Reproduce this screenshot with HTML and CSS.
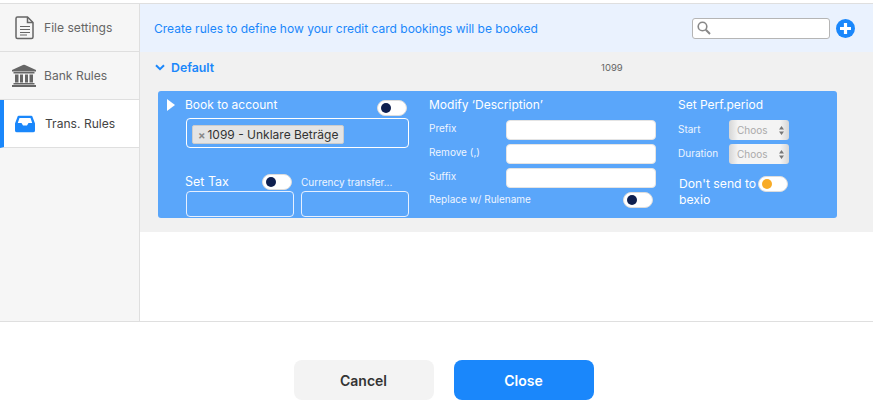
FILE: index.html
```html
<!DOCTYPE html>
<html lang="en">
<head>
<meta charset="utf-8">
<title>Trans. Rules</title>
<link rel="stylesheet" href="styles.css">
</head>
<body>
<div class="dialog">
  <div class="content">
    <nav class="sidebar">
      <div class="tab">
        <svg class="tab-icon" width="20" height="24" viewBox="0 0 20 24"><path d="M2.5 1h10l5.500 5.500V21a1.500 1.500 0 0 1-1.500 1.500h-14A1.500 1.500 0 0 1 1 21V2.500A1.500 1.500 0 0 1 2.500 1z" fill="none" stroke="#666" stroke-width="1.500"/><path d="M12.500 1v5.500H18" fill="none" stroke="#666" stroke-width="1.500"/><path d="M5 10.500h10M5 13.500h10M5 16.500h10M5 19h7" stroke="#666" stroke-width="1.200"/></svg>
        <span>File settings</span>
      </div>
      <div class="tab">
        <svg class="tab-icon" width="24" height="23" viewBox="0 0 24 23"><path d="M12 0L24 5.500V7H0V5.500z" fill="#666"/><path d="M1.500 7.500h21V9h-21zM3 10h3.500v8H3zM8 10h3v8H8zM13 10h3v8h-3zM17.500 10H21v8h-3.500zM1.500 18.500h21V20h-21zM0 20.500h24V22.500H0z" fill="#666"/></svg>
        <span>Bank Rules</span>
      </div>
      <div class="tab tab-active">
        <svg class="tab-icon" width="20" height="17" viewBox="0 0 20 17"><path d="M4 0h12a1.500 1.500 0 0 1 1.300.8L20 8v7a2 2 0 0 1-2 2H2a2 2 0 0 1-2-2V8L2.700.8A1.500 1.500 0 0 1 4 0zM4.500 2.500L2.800 7.500H6.500L8 10h4l1.500-2.500h3.700L15.500 2.500z" fill="#1a87fb" fill-rule="evenodd"/></svg>
        <span>Trans. Rules</span>
      </div>
    </nav>
    <main class="main">
      <header class="banner">
        <p class="banner-text">Create rules to define how your credit card bookings will be booked</p>
        <div class="search">
          <svg width="14" height="14" viewBox="0 0 14 14"><circle cx="5.500" cy="5.500" r="4.300" fill="none" stroke="#888" stroke-width="1.600"/><path d="M8.800 8.800L13 13" stroke="#888" stroke-width="2"/></svg>
        </div>
        <svg class="add" width="19" height="19" viewBox="0 0 19 19"><circle cx="9.500" cy="9.500" r="9.500" fill="#1a87fb"/><path d="M9.500 4v11M4 9.500h11" stroke="#fff" stroke-width="3.200"/></svg>
      </header>
      <section class="group">
        <div class="group-head">
          <svg width="10" height="7" viewBox="0 0 10 7"><path d="M1 1.200l4 4 4-4" fill="none" stroke="#1a87fb" stroke-width="2"/></svg>
          <span class="group-name">Default</span>
          <span class="group-code">1099</span>
        </div>
        <div class="rule">
          <svg class="rule-arrow" width="8" height="12" viewBox="0 0 8 12"><path d="M0 0l8 6-8 6z" fill="#fff"/></svg>
          <div class="col col-book">
            <div class="row-between book-head">
              <span class="title">Book to account</span>
              <span class="toggle toggle-low"><i class="knob"></i></span>
            </div>
            <div class="tag-box"><span class="tag"><b class="tag-x">×</b>1099 - Unklare Beträge</span></div>
            <div class="tax-row">
              <div class="tax-cell">
                <div class="row-between tax-head">
                  <span class="title title-tax">Set Tax</span>
                  <span class="toggle"><i class="knob"></i></span>
                </div>
                <div class="ghost-input"></div>
              </div>
              <div class="tax-cell">
                <div class="tax-head currency-head"><span class="small">Currency transfer...</span></div>
                <div class="ghost-input"></div>
              </div>
            </div>
          </div>
          <div class="col col-modify">
            <span class="title modify-title">Modify ‘Description’</span>
            <div class="field"><span class="small">Prefix</span><div class="white-input"></div></div>
            <div class="field"><span class="small">Remove (,)</span><div class="white-input"></div></div>
            <div class="field"><span class="small">Suffix</span><div class="white-input"></div></div>
            <div class="row-between replace"><span class="small">Replace w/ Rulename</span><span class="toggle"><i class="knob"></i></span></div>
          </div>
          <div class="col col-period">
            <span class="title modify-title">Set Perf.period</span>
            <div class="field field-period"><span class="small">Start</span><div class="select">Choos<svg width="5" height="11" viewBox="0 0 5 11"><path d="M2.500 1L5 4.500H0zM2.500 10L0 6.500h5z" fill="#777"/></svg></div></div>
            <div class="field field-period"><span class="small">Duration</span><div class="select">Choos<svg width="5" height="11" viewBox="0 0 5 11"><path d="M2.500 1L5 4.500H0zM2.500 10L0 6.500h5z" fill="#777"/></svg></div></div>
            <div class="nosend">
              <span class="nosend-text">Don't send to bexio</span>
              <span class="toggle toggle-orange"><i class="knob"></i></span>
            </div>
          </div>
        </div>
      </section>
    </main>
  </div>
  <footer class="footer">
    <button class="btn btn-cancel" type="button">Cancel</button>
    <button class="btn btn-close" type="button">Close</button>
  </footer>
</div>
</body>
</html>
```
FILE: styles.css
```css
* { box-sizing: border-box; }
html, body { margin: 0; padding: 0; }
body {
  width: 873px;
  height: 411px;
  overflow: hidden;
  background: #fff;
  font-family: Inter, "Liberation Sans", sans-serif;
  color: #333;
}
.dialog { height: 411px; display: flex; flex-direction: column; padding-top: 3px; }
.content {
  display: flex;
  height: 317px;
  border-top: 1px solid #dfdfdf;
  border-bottom: 1px solid #dfdfdf;
  box-sizing: content-box;
}
.sidebar {
  width: 140px;
  flex: none;
  background: #f6f6f6;
  border-right: 1px solid #dfdfdf;
}
.tab {
  height: 48px;
  position: relative;
  display: flex;
  align-items: center;
  padding-left: 44px;
  border-bottom: 1px solid #dfdfdf;
  font-size: 12.100px;
  color: #666;
}
.tab-icon { position: absolute; left: 15px; top: 50%; transform: translateY(-50%); }
.tab:nth-child(2) .tab-icon { left: 12px; }
.tab-active { background: #fff; color: #444; border-left: 4px solid #1a87fb; padding-left: 41px; }
.tab-active .tab-icon { left: 11px; }
.main { flex: 1; min-width: 0; }
.banner {
  height: 48px;
  background: #eaf2fe;
  display: flex;
  align-items: center;
  padding: 0 18px 0 14px;
}
.banner-text { margin: 0; flex: 1; font-size: 12px; color: #1a87fb; }
.search {
  width: 138px;
  height: 21px;
  background: #fff;
  border: 1px solid #b5b5b5;
  border-radius: 3px;
  display: flex;
  align-items: center;
  padding-left: 4px;
}
.add { margin-left: 6px; }
.group { height: 180px; background: #f1f1f1; padding: 0 36px 0 15px; }
.group-head {
  height: 39px;
  display: flex;
  align-items: center;
  padding-bottom: 8px;
  position: relative;
}
.group-name { margin-left: 6px; font-size: 12.300px; font-weight: 600; color: #1a87fb; }
.group-code { margin-left: 387px; font-size: 9.500px; color: #666; }
.rule {
  position: relative;
  margin-left: 3px;
  width: 679px;
  height: 127px;
  background: #5aa6fa;
  border-radius: 3px;
  display: flex;
  padding-left: 28px;
  color: #fff;
}
.rule-arrow { position: absolute; left: 9px; top: 8px; }
.col { display: flex; flex-direction: column; }
.col-book { width: 223px; }
.col-modify { width: 227px; margin-left: 20px; }
.col-period { width: 111px; margin-left: 22px; }
.title { font-size: 12px; color: #fff; line-height: 16px; }
.title-tax { font-size: 12.500px; }
.small { font-size: 10px; color: #eef5ff; line-height: 14px; }
.row-between { display: flex; justify-content: space-between; align-items: center; }
.book-head { height: 27px; padding: 6px 2px 0 0; align-items: flex-start; }
.book-head .toggle { margin-top: 3px; }
.book-head .title { margin-left: -1px; }
.tag-box {
  height: 30px;
  border: 1px solid #fff;
  border-radius: 4px;
  padding: 4px 5px;
}
.tag {
  display: inline-block;
  height: 19px;
  line-height: 18px;
  background: #e4e4e4;
  border: 1px solid #ccc;
  border-radius: 2px;
  padding: 0 5px;
  font-size: 12px;
  color: #333;
}
.tag-x { font-weight: 700; color: #888; margin-right: 2px; font-size: 11px; }
.tax-row { display: flex; gap: 7px; margin-top: 25px; }
.tax-cell { display: flex; flex-direction: column; width: 108px; }
.tax-head { height: 18px; padding-right: 2px; }
.tax-head .title { margin-left: -1px; }
.currency-head { display: flex; align-items: center; }
.ghost-input { height: 26px; border: 1px solid #e6f0ff; border-radius: 4px; }
.toggle {
  display: block;
  flex: none;
  width: 30px;
  height: 16px;
  background: #fff;
  border: 1px solid #ddd;
  border-radius: 8px;
  padding: 2px 0 0 3px;
}
.knob { display: block; width: 10px; height: 10px; border-radius: 50%; background: #0e1f4f; }
.toggle-orange .knob { background: #f8ab27; }
.modify-title { display: block; margin: 6px 0 7px; }
.field { display: flex; align-items: flex-start; justify-content: space-between; height: 24px; }
.field .small { padding-top: 1px; }
.field-period .small { padding-top: 2px; }
.white-input { width: 150px; height: 20px; background: #fff; border: 1px solid #e4e4e4; border-radius: 4px; }
.replace { padding-right: 3px; height: 16px; align-items: flex-start; margin-top: 0; }
.select {
  width: 60px;
  height: 20px;
  margin-right: 0;
  background: linear-gradient(90deg, #d6d6d6, #f4f4f4 15%, #f4f4f4 85%, #d6d6d6);
  border-radius: 3px;
  display: flex;
  align-items: center;
  justify-content: space-between;
  padding: 0 5px 0 8px;
  font-size: 10px;
  color: #aaa;
}
.nosend {
  position: relative;
  margin: 8px 0 0 1px;
  width: 110px;
}
.nosend-text { display: block; width: 84px; font-size: 12.200px; line-height: 16px; color: #fff; }
.nosend .toggle { position: absolute; left: 79px; top: 0; }
.footer {
  flex: 1;
  display: flex;
  justify-content: center;
  align-items: flex-start;
  gap: 20px;
  padding: 38px 0 0 14px;
}
.btn {
  width: 140px;
  height: 40px;
  border: 0;
  border-radius: 8px;
  font-family: inherit;
  font-size: 14px;
  font-weight: 600;
}
.btn-cancel { background: #f3f3f3; color: #333; }
.btn-close { background: #1a87fb; color: #fff; }
```
